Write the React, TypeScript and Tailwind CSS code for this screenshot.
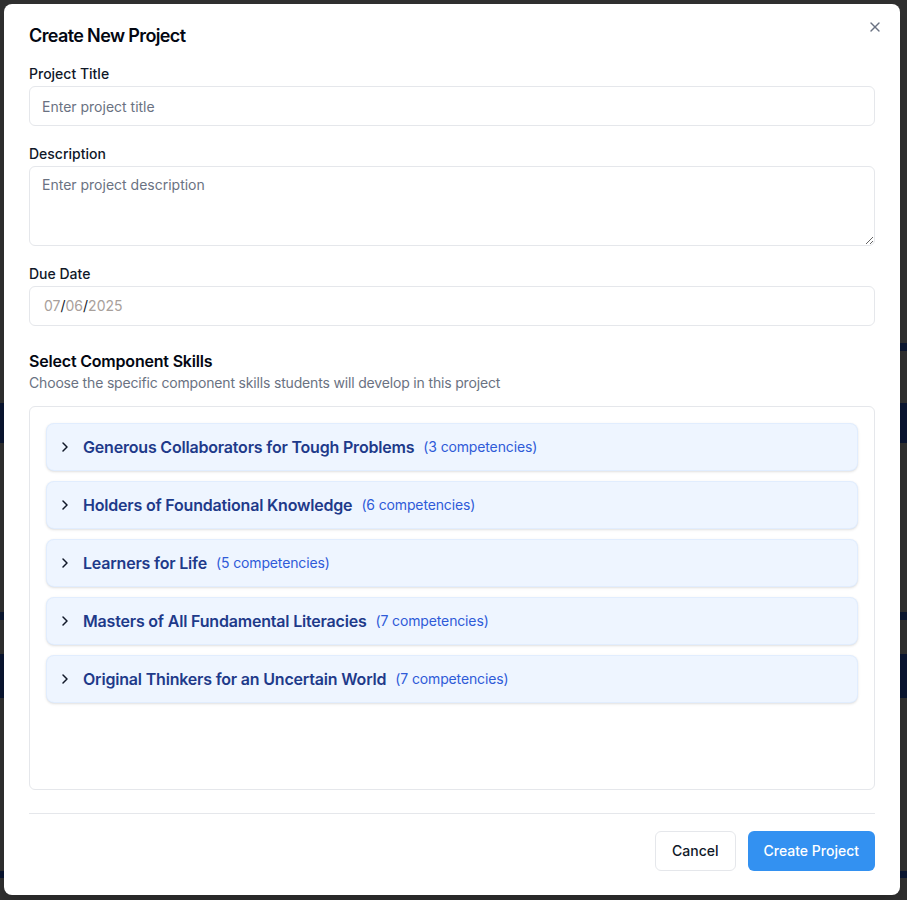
import { X, ChevronRight } from "lucide-react";

const skillGroups = [
  { name: "Generous Collaborators for Tough Problems", count: 3 },
  { name: "Holders of Foundational Knowledge", count: 6 },
  { name: "Learners for Life", count: 5 },
  { name: "Masters of All Fundamental Literacies", count: 7 },
  { name: "Original Thinkers for an Uncertain World", count: 7 },
];

const font = { fontFamily: "Inter, 'Noto Sans', sans-serif" };

export default function App() {
  return (
    <div className="relative h-[900px] w-full overflow-hidden bg-[#2f2f2f]" style={font}>
      {/* dimmed page behind the dialog */}
      <div className="flex flex-col">
        <div className="mt-[343px] ml-auto h-[8px] w-[40px] bg-[#0c1730]" />
        <div className="mt-[52px] h-[40px] w-full bg-[#0a1530]" />
        <div className="mt-[169px] h-[8px] w-full bg-[#0c1730]" />
        <div className="mt-[34px] h-[44px] w-full bg-[#0a1530]" />
        <div className="mt-[173px] h-[7px] w-full bg-[#0a1530]" />
      </div>

      {/* dialog */}
      <div className="absolute left-[4px] top-[4px] w-[896px] rounded-lg bg-white px-[25px] pt-[18px] pb-[24px] shadow-xl">
        <button className="absolute right-[17px] top-[15px] text-gray-500">
          <X className="h-4 w-4" strokeWidth={2} />
        </button>

        <h2 className="text-lg font-semibold leading-7 tracking-[-0.035em] text-gray-950">Create New Project</h2>

        <div className="mt-[14px]">
          <label className="block text-sm font-medium leading-5 text-gray-900">Project Title</label>
          <input
            className="mt-0.5 h-10 w-full rounded-md border border-gray-200 px-3 text-sm text-gray-900 outline-none placeholder:text-gray-500"
            placeholder="Enter project title"
          />
        </div>

        <div className="mt-[18px]">
          <label className="block text-sm font-medium leading-5 text-gray-900">Description</label>
          <textarea
            className="mt-0.5 block h-20 w-full rounded-md border border-gray-200 px-3 py-2 text-sm text-gray-900 outline-none placeholder:text-gray-500"
            placeholder="Enter project description"
          />
        </div>

        <div className="mt-[18px]">
          <label className="block text-sm font-medium leading-5 text-gray-900">Due Date</label>
          <div className="mt-0.5 flex h-10 w-full items-center rounded-md border border-gray-200 px-[14px] text-sm">
            <span className="text-[#a8a09b]">07</span>
            <span className="text-gray-900">/</span>
            <span className="text-[#a8a09b]">06</span>
            <span className="text-gray-900">/</span>
            <span className="text-[#a8a09b]">2025</span>
          </div>
        </div>

        <div className="mt-[23px]">
          <h3 className="text-base font-semibold leading-6 tracking-[-0.012em] text-gray-950">Select Component Skills</h3>
          <p className="text-sm leading-5 tracking-[-0.012em] text-gray-500">
            Choose the specific component skills students will develop in this project
          </p>
        </div>

        <div className="mt-[13px] h-96 overflow-y-auto rounded-md border border-gray-200 p-4">
          <div className="flex flex-col gap-2.5">
            {skillGroups.map((g) => (
              <div
                key={g.name}
                className="flex h-12 items-center rounded-lg border border-blue-100/70 bg-[#eef5ff] px-2.5 shadow-sm"
              >
                <ChevronRight className="h-4 w-4 text-gray-900" strokeWidth={2.25} />
                <span className="ml-2.5 text-base font-semibold tracking-[-0.012em] text-[#1e3a8a]">
                  {g.name}
                </span>
                <span className="ml-[9px] text-sm tracking-[-0.01em] text-[#2f5bd8]">
                  ({g.count} competencies)
                </span>
              </div>
            ))}
          </div>
        </div>

        <div className="mt-[23px] border-t border-gray-200" />

        <div className="mt-[17px] flex justify-end gap-3">
          <button className="h-10 rounded-md border border-gray-200 bg-white px-4 text-sm font-medium text-gray-900">
            Cancel
          </button>
          <button className="h-10 rounded-md bg-[#3391f1] px-4 text-sm font-medium text-white">
            Create Project
          </button>
        </div>
      </div>
    </div>
  );
}
